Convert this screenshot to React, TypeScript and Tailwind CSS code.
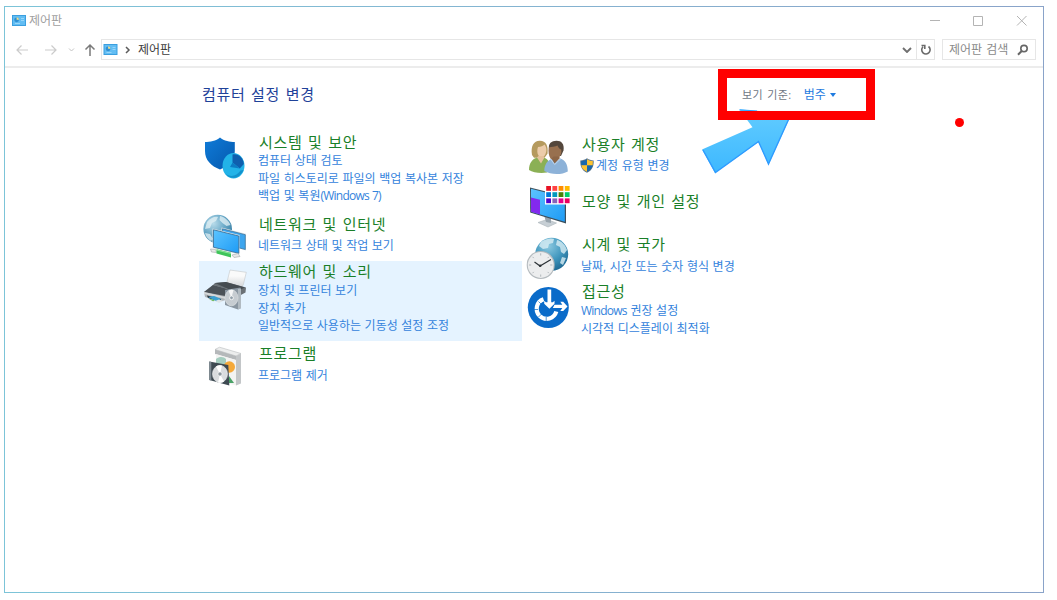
import type { ReactNode } from "react";
import clsx from "clsx";

function PanelIcon({ className }: { className?: string }) {
  return (
    <svg viewBox="0 0 14 11" className={className}>
      <rect width="14" height="11" fill="#3b9fdf" />
      <rect x="1" y="1" width="12" height="9" fill="#62bdf3" />
      <circle cx="4.6" cy="4.8" r="2.4" fill="#2f8fd2" />
      <path d="M4.6 4.8V2.2A2.6 2.6 0 0 1 7 4.800z" fill="#f5e08a" />
      <path d="M9 3.5h3M9 5.5h3M3 8.5h5" stroke="#a5dcfb" strokeWidth=".8" />
    </svg>
  );
}

function SecurityIcon() {
  return (
    <>
      <path d="M17 1.5c4 3.5 10 4.500 14.800 4.500v9c0 9-6 15-14.800 18.500C8 30 2 24 2 15V6c5 0 11-1 15-4.500z" fill="url(#shield)" />
      <ellipse cx="30.500" cy="29.700" rx="11" ry="12.800" fill="#22b3e8" />
      <path d="M22 37.500c5 6 14 6.500 18.500-3.500l-3 .5c-4 6-10 7-15.500 3z" fill="#1292cc" />
      <path d="M29.500 18.500c6-1 10.500 3 11.300 9.500l-4 4.500-7.300-6z" fill="#0f5fae" />
      <path d="M29.500 26.500l7.300 6-9.800-1.500z" fill="#0c7cc4" />
    </>
  );
}

function NetworkIcon() {
  return (
    <>
      <circle cx="14.700" cy="15" r="14.300" fill="url(#globe)" />
      <path d="M4 8c3-4 8-6 11-5l-2 4-4 2-2 5-5 1zM17 2c5 1 9 5 10.500 9l-4 1-4-3-3-3zM2 19l5 1 3 5-2 2c-3-2-5-4-6-8z" fill="#e4f1f6" opacity=".75" />
      <path d="M18.500 13.500L43 19.800V36.500L18.500 30z" fill="#dfe6ea" />
      <path d="M19.500 14.800L42.300 20.700V35.500L19.500 29.500z" fill="#3da5ee" stroke="#376b92" strokeWidth=".7" />
      <path d="M9.500 14.500L36.500 21V40.500L9.500 34z" fill="#dfe6ea" />
      <path d="M10.500 15.800L35.800 22V39.300L10.500 33.200z" fill="url(#screen)" stroke="#376b92" strokeWidth=".8" />
      <path d="M7.500 35l5 .5 1 3-5-.5zM29 41l6-1.500 2 3-6 1z" fill="#e8e8e8" stroke="#aeb2b4" strokeWidth=".7" />
      <path d="M13.500 35.300l14.500 3.500v4.700l-14.500-4z" fill="#3fc45a" />
      <path d="M13.500 36l14.500 3.500" stroke="#8be59a" strokeWidth="1.200" />
    </>
  );
}

function PrinterIcon() {
  return (
    <>
      <path d="M27 4l16.300 2.300-3 12.500L36 24l-13-4z" fill="url(#paper)" stroke="#c4c7ca" strokeWidth=".6" />
      <path d="M12 17l11-1 20 5.500-.5 5-13 7-28-6z" fill="#6b7176" />
      <path d="M12 17l11-1 19 5.500-10 4.500z" fill="#464c51" />
      <path d="M1 26l9-7 22 6-1 7-14 3.500L2 31z" fill="#aeb3b7" />
      <path d="M1 26l9-7 22 6-10 5z" fill="#4b5157" />
      <path d="M1 26l21 5v1.800L1 28z" fill="#d5d8da" />
      <path d="M4 29.500l14 3.500-1 2.500L5 32z" fill="#2c3338" />
      <path d="M5 31l6-1 7 3-4 2.500z" fill="#3ba0d2" />
      <path d="M6 33l3 .300 3 1.500-2 .5z" fill="#6fb85a" />
      <path d="M12 35l4-1.500 4 1.500-4 2z" fill="#dfe5e8" />
      <path d="M22 24l15.500-2.500V42l-2.500 1.500L22 39z" fill="#8a96a1" />
      <path d="M35 23l3-.5v20L35 43.500z" fill="#b1bac1" />
      <ellipse cx="28.500" cy="31.800" rx="6.500" ry="8" fill="#c6ccd1" stroke="#e3e6e8" strokeWidth=".6" />
      <path d="M28.500 31.800l-3-7a7 8 0 0 1 5-.8z" fill="#fff" opacity=".8" />
      <circle cx="28.500" cy="31.800" r="1.900" fill="#93a0aa" stroke="#fff" strokeWidth=".8" />
    </>
  );
}

function ProgramsIcon() {
  return (
    <>
      <path d="M12 4.500l4.500-2.300L38 8.500l-5 2.500z" fill="#eceded" stroke="#b9bcbe" strokeWidth=".6" />
      <path d="M12 4.500L33 11v4l-21-6z" fill="#b5b8ba" />
      <path d="M13 9l20 6v25.500L13 35z" fill="#f3f3f2" />
      <path d="M33 11l5-2.500v30L33 40.500z" fill="#c3c6c8" />
      <path d="M13 14c4-3 8-2 10 0v9H13z" fill="#a5cdbf" />
      <circle cx="26.300" cy="22" r="5.700" fill="#f5a93a" />
      <path d="M26 31l5 7h-5z" fill="#4aa267" />
      <path d="M6.300 16.500L25.300 20l1 20.500L6.300 35z" fill="#3e4a52" />
      <path d="M6.300 16.500l2 .4v18.700l-2-.6z" fill="#7f8b93" />
      <ellipse cx="17" cy="29" rx="7.500" ry="8.600" fill="#d9dcde" stroke="#f7f7f7" strokeWidth=".6" />
      <path d="M17 29l-4-7.500a8 9 0 0 1 6-1zM17 29l4 7.500a8 9 0 0 1-6 1z" fill="#fff" />
      <circle cx="17" cy="29" r="2.100" fill="#8d979d" stroke="#fff" strokeWidth=".6" />
    </>
  );
}

function UsersIcon() {
  return (
    <>
      <path d="M6 19C4.500 10 8 4.500 14 4.800c6 .2 8.500 5 7.500 13l-3 4H8z" fill="#b59a5e" />
      <path d="M12 11c3 0 5-1 6.500-2.500 2.500 3 2.500 7 .5 10.500-1.500 2.500-4.500 3-6.500.500-1.500-2-1.500-6-.5-8.500z" fill="#ecccaa" />
      <path d="M3 34c0-7 3.500-11 8-12.500l3 2 4-2c4 1.500 6 5 6 9.500l-3 5.500c-7 1-14 0-18-2.500z" fill="#8bb055" />
      <path d="M11 21.500l4 6 3.500-6-1-1.500h-5z" fill="#e5c29c" />
      <path d="M23 13c-1-5.500 2.500-8.200 7.500-8.200S38.500 8 37.500 14.500L35 20H26z" fill="#54473c" />
      <path d="M22.800 11.500c2.500-1 6.500-.5 8.700-2 1 2 1.800 3.500 3.700 4 .500 2.500-.2 5.500-1.700 7.500-2 3.500-7 4.500-9 1.500-1.700-2.500-2.500-7-1.700-11z" fill="#98704f" />
      <path d="M18.300 35c0-6 3-10.500 7-12l4 3 5-3.500c5 1.500 7.500 6 7.500 13-6 3.500-17 3.500-23.500-.5z" fill="#8db2d8" />
      <path d="M25.500 22.500l3 5 5.500-5.500-1.500-1.500h-5z" fill="#8c6546" />
      <path d="M28.700 28.500l-4.200-5.500M28.700 28.500l6.300-6" stroke="#bfd6ec" strokeWidth="1" />
    </>
  );
}

const SWATCHES = [
  ["#e81123", "#ff4343", "#ff8c00", "#ffb900"],
  ["#0078d7", "#0099bc", "#498205", "#00cc6a"],
  ["#5200cc", "#8764b8", "#e3008c", "#ea005e"],
];

function AppearanceIcon() {
  return (
    <>
      <path d="M12 38.500l9-3 9.500 3.500-8.500 4z" fill="#c7cfd5" stroke="#aab3b9" strokeWidth=".6" />
      <path d="M18 31l7 2v6l-5-1z" fill="#98a4ad" />
      <path d="M4 3.500l36 9v27L4.200 28.500z" fill="#3d4f5b" />
      <path d="M5 4.800l33.800 8.700v24.300L5 27.800z" fill="url(#screen)" />
      <path d="M5 13.500l9 2.300v14.700l-9-2.700z" fill="#8329ee" />
      <rect x="19" y="1" width="25" height="19.500" fill="#fff" />
      {SWATCHES.map((row, r) =>
        row.map((fill, c) => (
          <rect key={fill} x={20.2 + c * 6.2} y={2 + r * 6.2} width="4.800" height="4.800" fill={fill} />
        )),
      )}
    </>
  );
}

function ClockIcon() {
  return (
    <>
      <circle cx="25.700" cy="18.300" r="16.500" fill="url(#globe2)" />
      <path d="M15 6c4-3 10-4.500 13-3l-1 4-4 1-1 4-5 1-4-3zM31 4c5 1 9 6 10 10l-3 4-3-2-1-5-4-2zM36 21l4 1-3 7-3-2z" fill="#d8edf4" opacity=".8" />
      <circle cx="14.700" cy="29" r="14" fill="#b4babe" />
      <circle cx="14.700" cy="29" r="12.900" fill="#ecedee" />
      <path d="M14.700 17.300v2.200M14.700 38.500v2.200M3 29h2.200M24.200 29h2.200M6.500 20.800l1.300 1.300M21.600 22.100l1.300-1.300M6.500 37.200l1.300-1.300M21.600 35.900l1.300 1.300" stroke="#a3aaaf" strokeWidth=".8" />
      <path d="M8.500 26l5.500 4 11-6.500" fill="none" stroke="#2d3337" strokeWidth="1.200" />
      <circle cx="14.200" cy="29.800" r="1.300" fill="#2d3337" />
    </>
  );
}

function AccessIcon() {
  return (
    <>
      <circle cx="22.300" cy="21.500" r="20.500" fill="#0a6bc9" />
      <path d="M17.500 13.300A10 10 0 1 0 30.300 25.500" fill="none" stroke="#fff" strokeWidth="4.200" />
      <path d="M7 23.500h5M20.200 31v5M12.500 15.500l3 3M12.500 31l3-3" stroke="#0a6bc9" strokeWidth=".7" />
      <path d="M21.500 3.500h3.700v12.800h1.600l1.700-1.600v3.100l-5.100 4.900-5.200-4.900v-3.100l1.700 1.600h1.600z" fill="#fff" />
      <path d="M28.500 18.700h7.800l-2-3h2.900l4.300 4.700-4.300 4.700h-2.900l2-3h-9.500z" fill="#fff" />
    </>
  );
}

function UacShield() {
  return (
    <svg viewBox="0 0 14 15" className="-ml-px mr-0.5 h-[15px] w-3.5 shrink-0">
      <path d="M7 .3C9 1.700 11 2.300 13.700 2.400c.2 5.600-1.400 9.900-6.700 12.300C1.700 12.300.1 8 .3 2.400 3 2.300 5 1.700 7 .3z" fill="#56728c" />
      <path d="M7 1.300v6H1.200V3.100C3.600 3 5.300 2.400 7 1.300zM7 7.300h5.600c-.6 3.200-2.500 5.100-5.600 6.500z" fill="#1767ad" />
      <path d="M7 1.300c1.700 1.100 3.400 1.700 5.800 1.800 0 1.500 0 3-.2 4.200H7zM1.300 7.300H7v6.500C3.800 12.400 1.900 10.500 1.300 7.300z" fill="#fcc331" />
    </svg>
  );
}

function Defs() {
  return (
    <svg width="0" height="0" className="absolute">
      <defs>
        <linearGradient id="shield" x1="0" y1="0" x2="1" y2="1">
          <stop offset="0" stopColor="#0f7bd8" />
          <stop offset="1" stopColor="#0558ad" />
        </linearGradient>
        <linearGradient id="screen" x1="0" y1="0" x2="1" y2="1">
          <stop offset="0" stopColor="#5cc4ff" />
          <stop offset="1" stopColor="#1e9bf5" />
        </linearGradient>
        <linearGradient id="paper" x1="0" y1="0" x2="0" y2="1">
          <stop offset=".3" stopColor="#fafafa" />
          <stop offset="1" stopColor="#c9cccf" />
        </linearGradient>
        <radialGradient id="globe" cx=".35" cy=".3" r=".8">
          <stop offset="0" stopColor="#b9dcea" />
          <stop offset=".5" stopColor="#6aa9c8" />
          <stop offset="1" stopColor="#2f789f" />
        </radialGradient>
        <radialGradient id="globe2" cx=".4" cy=".25" r=".8">
          <stop offset="0" stopColor="#8cc9e0" />
          <stop offset=".55" stopColor="#4197be" />
          <stop offset="1" stopColor="#1c6690" />
        </radialGradient>
        <linearGradient id="pointer" x1="0" y1="0" x2="0" y2="1">
          <stop offset="0" stopColor="#62ccff" />
          <stop offset="1" stopColor="#3db8ff" />
        </linearGradient>
      </defs>
    </svg>
  );
}

type Category = {
  title: string;
  links: string[];
  icon: ReactNode;
  row: string;
  iconClass: string;
  linksClass: string;
  shield?: boolean;
};

const LEFT: Category[] = [
  {
    title: "시스템 및 보안",
    links: ["컴퓨터 상태 검토", "파일 히스토리로 파일의 백업 복사본 저장", "백업 및 복원(Windows 7)"],
    icon: <SecurityIcon />,
    row: "h-20",
    iconClass: "mt-1",
    linksClass: "",
  },
  {
    title: "네트워크 및 인터넷",
    links: ["네트워크 상태 및 작업 보기"],
    icon: <NetworkIcon />,
    row: "h-[45px]",
    iconClass: "",
    linksClass: "mt-[3px]",
  },
  {
    title: "하드웨어 및 소리",
    links: ["장치 및 프린터 보기", "장치 추가", "일반적으로 사용하는 기동성 설정 조정"],
    icon: <PrinterIcon />,
    row: "h-20 bg-[#e5f3ff]",
    iconClass: "mt-[5px]",
    linksClass: "mt-px",
  },
  {
    title: "프로그램",
    links: ["프로그램 제거"],
    icon: <ProgramsIcon />,
    row: "h-[45px]",
    iconClass: "mt-0.5",
    linksClass: "mt-1",
  },
];

const RIGHT: Category[] = [
  {
    title: "사용자 계정",
    links: ["계정 유형 변경"],
    icon: <UsersIcon />,
    row: "h-[55px]",
    iconClass: "mt-0.5",
    linksClass: "mt-[3px]",
    shield: true,
  },
  {
    title: "모양 및 개인 설정",
    links: [],
    icon: <AppearanceIcon />,
    row: "h-[41px]",
    iconClass: "-mt-[7px]",
    linksClass: "",
  },
  {
    title: "시계 및 국가",
    links: ["날짜, 시간 또는 숫자 형식 변경"],
    icon: <ClockIcon />,
    row: "h-[45px]",
    iconClass: "mt-0.5",
    linksClass: "mt-1",
  },
  {
    title: "접근성",
    links: ["Windows 권장 설정", "시각적 디스플레이 최적화"],
    icon: <AccessIcon />,
    row: "h-20",
    iconClass: "mt-[5px]",
    linksClass: "mt-px",
  },
];

/** Latin runs are set tighter than the Hangul around them. */
function LinkText({ text }: { text: string }) {
  return text.split(/(\(?Windows(?: 7\))?)/).map((part, i) =>
    i % 2 ? (
      <span key={i} className="tracking-[-0.75px]">
        {part}
      </span>
    ) : (
      part
    ),
  );
}

function CategoryRow({ item }: { item: Category }) {
  return (
    <section className={clsx("flex pl-1", item.row)}>
      <svg viewBox="0 0 44 44" className={clsx("h-11 w-11 shrink-0", item.iconClass)}>
        {item.icon}
      </svg>
      <div className="ml-[11px] whitespace-nowrap">
        <h2 className="ml-px h-5 text-[15px] leading-5 tracking-[0.7px] text-[#1a7f28] [word-spacing:1px]">{item.title}</h2>
        <ul className={item.linksClass}>
          {item.links.map((link) => (
            <li key={link} className="flex h-[17.500px] items-center text-xs leading-[17px] text-[#3483dc] [word-spacing:0.500px]">
              {item.shield && <UacShield />}
              <a href="#">
                <LinkText text={link} />
              </a>
            </li>
          ))}
        </ul>
      </div>
    </section>
  );
}

function TitleBar() {
  return (
    <header className="flex h-[27px] items-center pl-[7px] text-xs text-[#a0a0a0]">
      <PanelIcon className="h-[11px] w-3.5" />
      <h1 className="ml-[3px]">제어판</h1>
      <svg viewBox="0 0 98 12" className="mr-[15px] ml-auto h-3 w-[98px]" fill="none" stroke="#b4b4b4">
        <path d="M0 5.500h10M43.500 1.500h9v9h-9zM87 1l9.500 9.500M96.500 1L87 10.500" />
      </svg>
    </header>
  );
}

function Toolbar() {
  return (
    <nav className="flex h-[34px] items-center border-b-2 border-[#ececec] pr-[7px] pb-px pl-[11px]">
      <svg viewBox="0 0 80 14" className="h-3.5 w-20" fill="none">
        <path d="M12 7H1M5.500 2.500L1 7l4.500 4.500M29 7h11M35.500 2.500L40 7l-4.500 4.500" stroke="#cbcbcb" strokeWidth="1.200" />
        <path d="M53 5.500L55.500 8l2.500-2.500" stroke="#c4c4c4" />
        <path d="M74 13V2M69.500 6.500L74 2l4.500 4.500" stroke="#7a7a7a" strokeWidth="1.500" />
      </svg>
      <div className="ml-[5px] flex h-[21px] flex-1 items-center border border-[#e6e6e6]">
        <PanelIcon className="ml-px h-[11px] w-[15px]" />
        <svg viewBox="0 0 6 8" className="ml-[7px] h-2 w-1.5" fill="none" stroke="#5c5c5c" strokeWidth="1.500">
          <path d="M1 1l3 3-3 3" />
        </svg>
        <span className="ml-[7px] text-xs text-[#3c3c3c]">제어판</span>
        <svg viewBox="0 0 10 6" className="mr-1 ml-auto h-1.5 w-2.5" fill="none" stroke="#707070" strokeWidth="1.900">
          <path d="M1 1l4 4 4-4" />
        </svg>
        <div className="flex h-full w-[18px] items-center justify-center border-l border-[#e6e6e6]">
          <svg viewBox="0 0 12 12" className="h-3 w-3" fill="none" stroke="#6a6a6a" strokeWidth="1.600">
            <path d="M8.500 2.500A4.200 4.200 0 1 1 3 2.800M1.500 1.500h3.300v3.600" />
          </svg>
        </div>
      </div>
      <div className="ml-[7px] flex h-[21px] w-[94px] items-center border border-[#e6e6e6] pl-1.5 text-xs text-[#8a8a8a] [word-spacing:1px]">
        제어판 검색
        <svg viewBox="0 0 12 12" className="mr-1.5 ml-auto h-3 w-3 shrink-0" fill="none" stroke="#666" strokeWidth="1.600">
          <circle cx="7" cy="4.600" r="3.200" />
          <path d="M4.700 7L1 10.800" strokeWidth="2" />
        </svg>
      </div>
    </nav>
  );
}

export default function App() {
  return (
    <div className="relative h-[600px] w-[1057px] overflow-hidden bg-white pt-1.5 pl-1 font-['Open_Sans','Noto_Sans_CJK_KR',sans-serif]">
      <Defs />
      <div className="h-[587px] w-[1040px] bg-linear-to-r from-[#7cc4d8] to-[#8aa3c9] p-px">
        <div className="h-full bg-white">
          <TitleBar />
          <Toolbar />
          <main className="pl-[194px]">
            <div className="flex h-[64px] pt-4">
              <h2 className="ml-[3px] h-5 w-[540px] text-[15px] leading-5 tracking-[0.7px] text-[#1f4299] [word-spacing:1px]">
                컴퓨터 설정 변경
              </h2>
              <div className="flex h-[22px] items-center text-[11px] tracking-[0.4px] text-[#707784] [word-spacing:1px]">
                보기 기준:
                <a href="#" className="ml-3 text-xs tracking-normal text-[#1f7be0]">
                  범주
                </a>
                <svg viewBox="0 0 6 4" className="ml-1 h-1 w-1.5">
                  <path d="M0 0h6L3 4z" fill="#1f7be0" />
                </svg>
              </div>
            </div>
            <div className="flex">
              <div className="flex w-[323px] flex-col gap-0.5">
                {LEFT.map((item) => (
                  <CategoryRow key={item.title} item={item} />
                ))}
              </div>
              <div className="flex flex-col gap-0.5 pt-0.5">
                {RIGHT.map((item) => (
                  <CategoryRow key={item.title} item={item} />
                ))}
              </div>
            </div>
          </main>
        </div>
      </div>

      {/* annotations on top of the window */}
      <svg viewBox="0 0 100 80" className="absolute top-[100px] left-[697px] h-20 w-[100px]">
        <path d="M42.500 9.500L95 13 71.500 64.500 61.500 42 18 73 5 49.500 55.500 27.300z" fill="url(#pointer)" />
        <path d="M94 14L71.500 64 61.500 41.500 18.500 72.500 6 50" fill="none" stroke="#2f9bff" strokeWidth="1.400" />
        <path d="M42.500 9.800L60 11" stroke="#2ea4ff" strokeWidth="1.200" />
      </svg>
      <div className="absolute top-[69px] left-[718px] h-[51px] w-[157px] border-9 border-[#ff0000]" />
      <div className="absolute top-[118px] left-[955px] h-[9px] w-[9px] rounded-full bg-[#ff0000]" />
    </div>
  );
}
